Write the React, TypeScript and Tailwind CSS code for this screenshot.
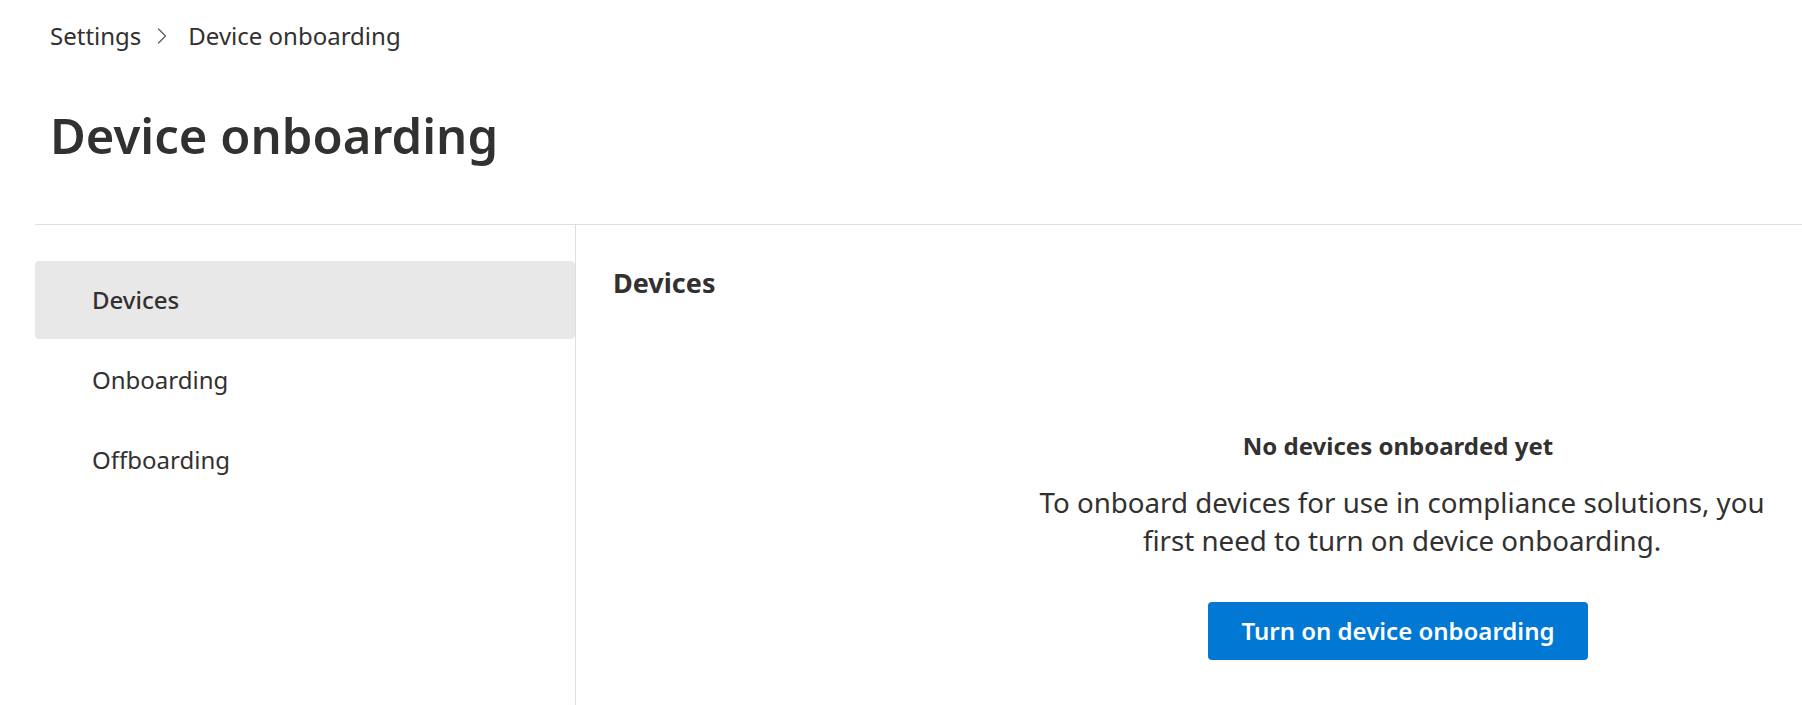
import { ChevronRight } from 'lucide-react'

const navItems = ['Devices', 'Onboarding', 'Offboarding']

export default function App() {
  return (
    <div className="h-[705px] w-full overflow-hidden bg-white text-[#323130] font-['Noto_Sans',sans-serif]">
      {/* breadcrumb */}
      <div className="flex items-center pl-[50px] pt-[18px] h-[54px] text-[24px]">
        <span>Settings</span>
        <ChevronRight className="ml-[7px] mr-[12px] w-[28px] h-[28px] text-[#605e5c]" strokeWidth={1.1} />
        <span>Device onboarding</span>
      </div>

      <h1 className="pl-[50px] mt-[56px] text-[49px] font-semibold leading-[50px]">Device onboarding</h1>

      <div className="ml-[35px] mt-[64px] flex border-t border-[#e1dfdd] h-[481px]">
        <nav className="w-[541px] shrink-0 border-r border-[#e1dfdd] pt-[36px]">
          {navItems.map((item, i) => (
            <div
              key={item}
              className={`flex items-center h-[78px] pl-[57px] text-[24px] rounded-[4px] ${
                i === 0 ? 'bg-[#e8e8e8] font-medium' : ''
              } ${i > 0 ? 'mt-[2px]' : ''}`}
            >
              {item}
            </div>
          ))}
        </nav>

        <section className="flex-1 flex flex-col pl-[37px] pt-[44px]">
          <h2 className="text-[27px] font-bold leading-none">Devices</h2>
          <div className="ml-auto w-[808px] mt-[134px] flex flex-col items-center text-center">
            <div className="text-[24px] font-bold leading-[32px]">No devices onboarded yet</div>
            <p className="mt-[21px] pl-[8px] text-[27.7px] leading-[38px]">
              To onboard devices for use in compliance solutions, you
              <br />
              first need to turn on device onboarding.
            </p>
            <button className="mt-[43px] w-[380px] h-[58px] rounded-[4px] bg-[#0078d4] text-white text-[24px] font-semibold">
              Turn on device onboarding
            </button>
          </div>
        </section>
      </div>
    </div>
  )
}
